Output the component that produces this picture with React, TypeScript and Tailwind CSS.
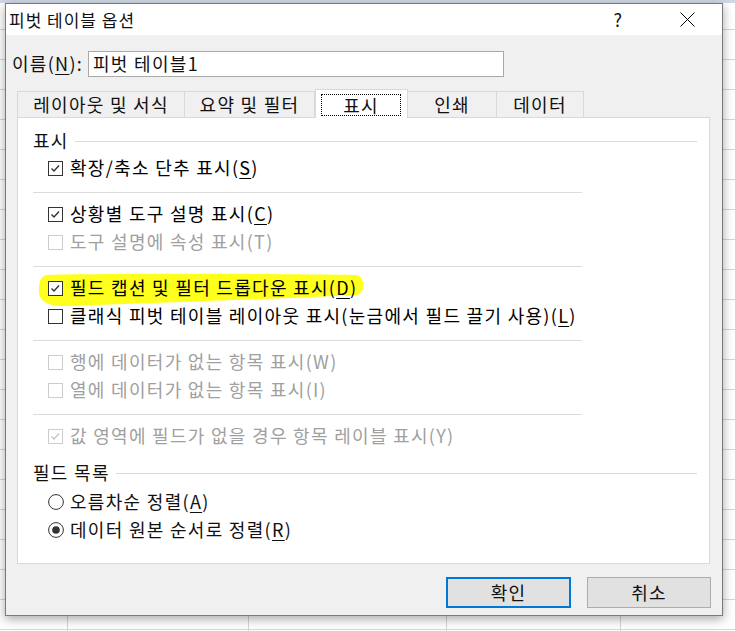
import React from "react";

type Label = [string, string?, string?];

function Box({ checked, disabled }: { checked?: boolean; disabled?: boolean }) {
  const edge = disabled ? "#cccccc" : "#333333";
  const tick = disabled ? "#c4c4c4" : "#333333";
  return (
    <svg width="15" height="15" viewBox="0 0 15 15" className="shrink-0">
      <rect x="0.5" y="0.5" width="14" height="14" fill="#ffffff" stroke={edge} />
      {checked && (
        <polyline points="3.5,7.5 6,10 11,4.5" fill="none" stroke={tick} strokeWidth="1.4" />
      )}
    </svg>
  );
}

function Radio({ checked }: { checked?: boolean }) {
  return (
    <svg width="16" height="16" viewBox="0 0 16 16" className="shrink-0">
      <circle cx="8" cy="8" r="7.4" fill="#ffffff" stroke="#333333" />
      {checked && <circle cx="8" cy="8" r="3.8" fill="#333333" />}
    </svg>
  );
}

function Text({ label }: { label: Label }) {
  const [pre, key, post] = label;
  return (
    <span className="relative whitespace-nowrap -translate-y-px">
      {pre}
      {key && <span className="underline underline-offset-[3px] decoration-1">{key}</span>}
      {post}
    </span>
  );
}

function CheckRow({
  label,
  checked,
  disabled,
  marker,
}: {
  label: Label;
  checked?: boolean;
  disabled?: boolean;
  marker?: boolean;
}) {
  return (
    <div
      className={`relative flex items-center h-[28px] pl-[30px] gap-[7px] ${
        disabled ? "text-[#a0a0a0]" : "text-black"
      }`}
    >
      {marker && (
        <svg
          width="328"
          height="34"
          viewBox="0 0 328 34"
          className="absolute left-[20px] top-[-1px]"
        >
          <path
            d="M9,2 C100,0 250,1 319,2 C327,4 328,19 319,22 C260,25 150,29 30,33 C8,34 0,27 1,17 C1,8 3,3 9,2 Z"
            fill="#ffff1e"
          />
        </svg>
      )}
      <span className="relative flex">
        <Box checked={checked} disabled={disabled} />
      </span>
      <Text label={label} />
    </div>
  );
}

function RadioRow({ label, checked }: { label: Label; checked?: boolean }) {
  return (
    <div className="flex items-center h-[28px] pl-[30px] gap-[6px]">
      <Radio checked={checked} />
      <Text label={label} />
    </div>
  );
}

function GroupHead({ title }: { title: string }) {
  return (
    <div className="flex items-center h-[26px] pl-[15px] pr-[12px]">
      <span className="-translate-y-px">{title}</span>
      <div className="flex-1 h-px bg-[#dcdcdc] ml-[6px]" />
    </div>
  );
}

function Rule() {
  return <div className="ml-[15px] w-[549px] h-px bg-[#dcdcdc] mt-[10px] mb-[7px]" />;
}

const tabs = [
  { name: "레이아웃 및 서식", w: "w-[168px] border-l" },
  { name: "요약 및 필터", w: "w-[130px]" },
  { name: "표시", w: "w-[93px]", active: true },
  { name: "인쇄", w: "w-[89px]" },
  { name: "데이터", w: "w-[87px]" },
];

export default function App() {
  return (
    <div className="w-[735px] h-[631px] overflow-hidden pt-[3px] pl-[5px] bg-[linear-gradient(to_bottom,#cfd8e4_0_3px,transparent_3px),linear-gradient(to_right,transparent_0_67px,#d6d6d6_67px_68px,transparent_68px_248px,#d6d6d6_248px_249px,transparent_249px_446px,#d6d6d6_446px_447px,transparent_447px_620px,#d6d6d6_620px_621px,transparent_621px),repeating-linear-gradient(to_bottom,#ffffff_0_29px,#d6d6d6_29px_30px)] font-['Noto_Sans_CJK_KR','Noto_Sans',sans-serif] text-[18px] tracking-[1.3px] text-[#111111]">
      <div className="w-[718px] h-[613px] flex flex-col border border-[#7a7a7a] bg-[#f0f0f0] shadow-[0_3px_10px_rgba(0,0,0,0.35)]">
        {/* title bar */}
        <div className="h-[31px] shrink-0 flex items-center bg-white pl-[3px] pr-[27px]">
          <span className="text-[17px] tracking-[1px]">피벗 테이블 옵션</span>
          <span className="ml-auto mr-[58px] text-[18px] tracking-normal">?</span>
          <svg width="15" height="15" viewBox="0 0 15 15">
            <path d="M0.5,0.5 L14.5,14.5 M14.5,0.5 L0.5,14.5" stroke="#000000" strokeWidth="1" />
          </svg>
        </div>

        {/* name */}
        <div className="flex items-center mt-[15px] pl-[6px]">
          <span className="w-[76px]">
            이름(<span className="underline underline-offset-[3px] decoration-1">N</span>):
          </span>
          <div className="w-[416px] h-[26px] flex items-center border border-[#a9a9a9] bg-white pl-[4px]">
            피벗 테이블1
          </div>
        </div>

        {/* tabs */}
        <div className="flex items-end h-[28px] mt-[12px] ml-[11px]">
          {tabs.map((t) =>
            t.active ? (
              <div
                key={t.name}
                className={`relative z-10 ${t.w} h-[29px] -mb-px flex pt-[4px] pb-[2px] pl-[5px] pr-[6px] bg-white border-t border-l border-r border-[#d9d9d9]`}
              >
                <div className="flex-1 flex items-center justify-center border border-dotted border-black">
                  {t.name}
                </div>
              </div>
            ) : (
              <div
                key={t.name}
                className={`${t.w} h-[26px] flex items-center justify-center border-t border-r border-[#d9d9d9] bg-[#f0f0f0]`}
              >
                {t.name}
              </div>
            )
          )}
        </div>

        {/* panel */}
        <div className="w-[693px] h-[447px] ml-[11px] border border-[#d9d9d9] bg-white pt-[10px]">
          <GroupHead title="표시" />
          <CheckRow label={["확장/축소 단추 표시(", "S", ")"]} checked />
          <Rule />
          <CheckRow label={["상황별 도구 설명 표시(", "C", ")"]} checked />
          <CheckRow label={["도구 설명에 속성 표시(T)"]} disabled />
          <Rule />
          <CheckRow label={["필드 캡션 및 필터 드롭다운 표시(", "D", ")"]} checked marker />
          <CheckRow label={["클래식 피벗 테이블 레이아웃 표시(눈금에서 필드 끌기 사용)(", "L", ")"]} />
          <Rule />
          <CheckRow label={["행에 데이터가 없는 항목 표시(W)"]} disabled />
          <CheckRow label={["열에 데이터가 없는 항목 표시(I)"]} disabled />
          <Rule />
          <CheckRow label={["값 영역에 필드가 없을 경우 항목 레이블 표시(Y)"]} checked disabled />

          <div className="mt-[10px]">
            <GroupHead title="필드 목록" />
          </div>
          <div className="mt-[2px]">
            <RadioRow label={["오름차순 정렬(", "A", ")"]} />
            <RadioRow label={["데이터 원본 순서로 정렬(", "R", ")"]} checked />
          </div>
        </div>

        {/* buttons */}
        <div className="flex justify-end gap-[16px] mt-[13px] pr-[11px]">
          <div className="w-[125px] h-[31px] flex items-center justify-center border-2 border-[#0078d7] bg-[#e1e1e1]">
            확인
          </div>
          <div className="w-[124px] h-[31px] flex items-center justify-center border border-[#adadad] bg-[#e1e1e1]">
            취소
          </div>
        </div>
      </div>
    </div>
  );
}
